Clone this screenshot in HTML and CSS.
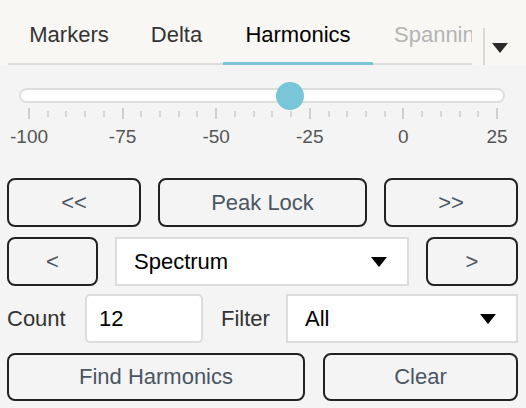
FILE: index.html
```html
<!DOCTYPE html>
<html lang="en">
<head>
  <meta charset="UTF-8" />
  <meta name="viewport" content="width=device-width, initial-scale=1.0" />
  <title>Harmonics</title>
  <link rel="stylesheet" href="styles.css">
</head>
<body>
  <div class="tabbar">
    <div class="tabs">
      <div class="tab t-markers">Markers</div>
      <div class="tab t-delta">Delta</div>
      <div class="tab t-harm active">Harmonics</div>
      <div class="tab t-span disabled">Spanning</div>
    </div>
    <div class="tab-menu">
      <svg width="16" height="10" viewBox="0 0 16 10"><path d="M0 0H16L8 10Z" fill="#2b2b2b"/></svg>
    </div>
  </div>

  <div class="panel">
    <div class="slider">
      <div class="track">
        <div class="thumb" id="thumb"></div>
      </div>
      <div class="ticks" id="ticks"></div>
      <div class="labels">
        <span>-100</span><span>-75</span><span>-50</span><span>-25</span><span>0</span><span>25</span>
      </div>
    </div>

    <div class="row row-nav">
      <button class="btn">&lt;&lt;</button>
      <button class="btn">Peak Lock</button>
      <button class="btn">&gt;&gt;</button>
    </div>

    <div class="row row-source">
      <button class="btn">&lt;</button>
      <div class="select">
        <span>Spectrum</span>
        <svg width="16" height="10" viewBox="0 0 16 10"><path d="M0 0H16L8 10Z" fill="#000"/></svg>
      </div>
      <button class="btn">&gt;</button>
    </div>

    <div class="row row-opts">
      <label class="lbl">Count</label>
      <input class="num" type="text" value="12" />
      <label class="lbl lbl-filter">Filter</label>
      <div class="select">
        <span>All</span>
        <svg width="16" height="10" viewBox="0 0 16 10"><path d="M0 0H16L8 10Z" fill="#000"/></svg>
      </div>
    </div>

    <div class="row row-actions">
      <button class="btn">Find Harmonics</button>
      <button class="btn">Clear</button>
    </div>
  </div>

  <script>
    // ticks: 5 groups of 5 between -100 and 25
    const ticks = document.getElementById('ticks');
    for (let i = 0; i <= 25; i++) {
      const t = document.createElement('i');
      if (i % 5 === 0) t.className = 'major';
      ticks.appendChild(t);
    }

    // thumb sits on the tick scale (8px in from the track, 468px wide)
    const min = -100, max = 25, value = -30.3;
    document.getElementById('thumb').style.left = (8 + (value - min) / (max - min) * 468) + 'px';
  </script>
</body>
</html>
```

FILE: styles.css
```css
* { box-sizing: border-box; }
body {
  margin: 0;
  width: 526px;
  height: 408px;
  overflow: hidden;
  font-family: "Liberation Sans", Arial, sans-serif;
  background: #f4f4f4;
}
.tabbar {
  height: 65px;
  background: #f8f7f4;
  display: flex;
  align-items: flex-end;
  padding-left: 8px;
}
.tabs {
  flex: none;
  display: flex;
  width: 464px;
  overflow: hidden;
}
.tab {
  flex: none;
  height: 65px;
  padding-top: 22px;
  line-height: 26px;
  font-size: 22px;
  text-align: center;
  color: #333;
  white-space: nowrap;
  border-bottom: 2px solid #dcdcdc;
}
.t-markers { width: 122px; }
.t-delta { width: 93px; }
.t-harm { width: 150px; }
.t-span { width: 140px; text-align: left; padding-left: 21px; }
.tab.active {
  color: #000;
  border-bottom: 3px solid #7ac6d9;
}
.tab.disabled { color: #b4b4b4; }
.tab-menu {
  flex: none;
  width: 43px;
  height: 37px;
  margin-left: 11px;
  border-left: 2px solid #d8d8d8;
  padding: 15px 0 0 7px;
  display: flex;
  align-items: flex-start;
}

.panel {
  padding: 0 8px 0 7px;
}
.slider {
  padding-top: 23px;
  height: 113px;
}
.track {
  position: relative;
  margin: 0 13px 0 12px;
  height: 15px;
  background: #fff;
  border: 2px solid #dedede;
  border-radius: 8px;
}
.thumb {
  position: absolute;
  top: 50%;
  width: 28px;
  height: 28px;
  margin: -14px 0 0 -14px;
  border-radius: 50%;
  background: #7ac6d9;
}
.ticks {
  display: flex;
  justify-content: space-between;
  align-items: center;
  margin: 5px 0 0 21px;
  width: 470px;
  height: 11px;
}
.ticks i {
  width: 2px;
  height: 6px;
  background: #d6d6d6;
}
.ticks i.major { height: 11px; background: #cfcfcf; }
.labels {
  display: flex;
  justify-content: space-between;
  margin: 7px 0 0 22px;
  width: 468px;
  line-height: 21px;
}
.labels span {
  width: 0;
  display: flex;
  justify-content: center;
  font-size: 19px;
  color: #555;
  white-space: nowrap;
}

.row {
  display: grid;
  align-items: center;
  height: 49px;
}
.row-nav { grid-template-columns: 134px 1fr 134px; column-gap: 17px; margin-bottom: 10px; }
.row-source { grid-template-columns: 91px 1fr 92px; column-gap: 17px; margin-bottom: 8px; }
.row-opts { grid-template-columns: 78px 118px 83px 1fr; margin-bottom: 10px; }
.row-actions { grid-template-columns: 298px 1fr; column-gap: 18px; height: 48px; }

.btn {
  height: 100%;
  border: 2px solid #222;
  border-radius: 8px;
  background: transparent;
  font-family: inherit;
  font-size: 22px;
  color: #4a5663;
  padding: 0;
}
.select {
  height: 100%;
  background: #fff;
  border: 2px solid #dcdcdc;
  display: flex;
  align-items: center;
  justify-content: space-between;
  padding: 0 20px 0 17px;
  font-size: 22px;
  color: #000;
}
.lbl {
  font-size: 22px;
  color: #333;
}
.lbl-filter { padding-left: 18px; }
.num {
  height: 100%;
  width: 100%;
  border: 2px solid #dcdcdc;
  border-radius: 5px;
  background: #fff;
  font-family: inherit;
  font-size: 22px;
  color: #000;
  padding: 0 12px;
}
```
